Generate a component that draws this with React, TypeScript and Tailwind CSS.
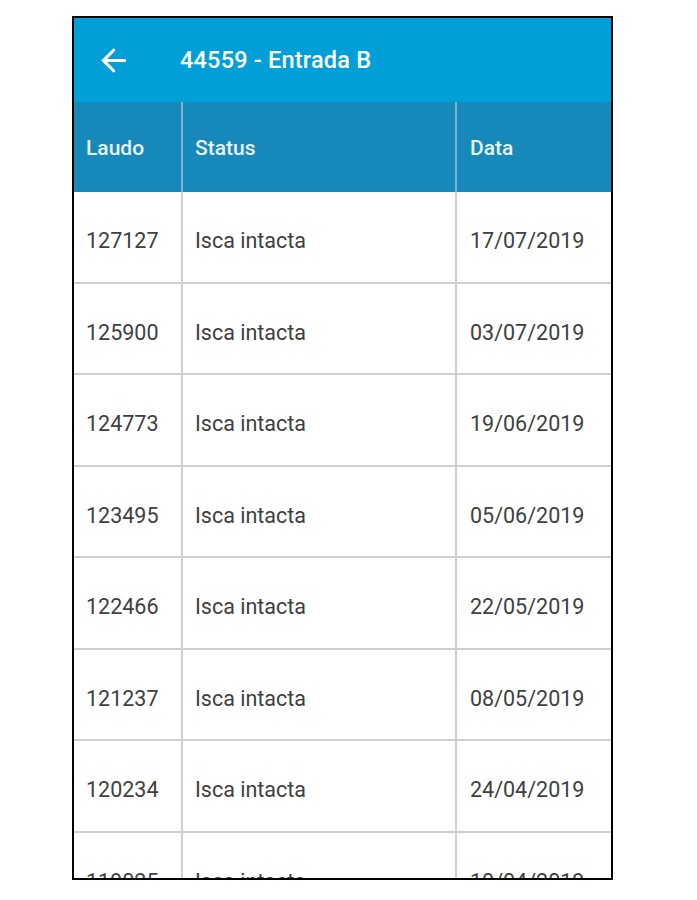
import * as React from "react";

const rows = [
  ["127127", "Isca intacta", "17/07/2019"],
  ["125900", "Isca intacta", "03/07/2019"],
  ["124773", "Isca intacta", "19/06/2019"],
  ["123495", "Isca intacta", "05/06/2019"],
  ["122466", "Isca intacta", "22/05/2019"],
  ["121237", "Isca intacta", "08/05/2019"],
  ["120234", "Isca intacta", "24/04/2019"],
  ["119025", "Isca intacta", "10/04/2019"],
];

const ArrowBack: React.FC = () => (
  <svg viewBox="0 0 24 24" className="w-[37px] h-[37px]" fill="currentColor">
    <path d="M20 11H7.83l5.59-5.59L12 4l-8 8 8 8 1.41-1.41L7.83 13H20v-2z" />
  </svg>
);

export default function App() {
  return (
    <div className="min-h-[900px] bg-white font-['Roboto',sans-serif]">
      <div className="ml-[72px] pt-[16px]">
        <div className="w-[541px] h-[864px] border-2 border-black overflow-hidden flex flex-col">
          {/* app bar */}
          <div className="h-[84px] shrink-0 bg-[#009fd8] flex items-center pl-[21px] text-white">
            <ArrowBack />
            <span className="ml-[48px] pt-[2px] text-[23.5px] font-medium tracking-[0.2px]">44559 - Entrada B</span>
          </div>

          {/* table header */}
          <div className="h-[90px] shrink-0 bg-[#1689ba] flex text-[21px] font-medium text-[#e8f4fa]">
            <div className="w-[107px] flex items-center pl-[12px] pt-[4px]">Laudo</div>
            <div className="w-[274px] flex items-center pl-[12px] pt-[4px] border-l-2 border-[#7db4cf]">Status</div>
            <div className="flex-1 flex items-center pl-[13px] pt-[4px] border-l-2 border-[#7db4cf]">Data</div>
          </div>

          {/* rows */}
          {rows.map(([laudo, status, data]) => (
            <div key={laudo} className="h-[91.5px] shrink-0 flex border-b-2 border-[#cfcfcf] text-[21.5px] text-[#404040]">
              <div className="w-[107px] flex items-center pl-[12px] pt-[9px]">{laudo}</div>
              <div className="w-[274px] flex items-center pl-[12px] pt-[9px] border-l-2 border-[#cfcfcf]">{status}</div>
              <div className="flex-1 flex items-center pl-[13px] pt-[9px] border-l-2 border-[#cfcfcf]">{data}</div>
            </div>
          ))}
        </div>
      </div>
    </div>
  );
}
